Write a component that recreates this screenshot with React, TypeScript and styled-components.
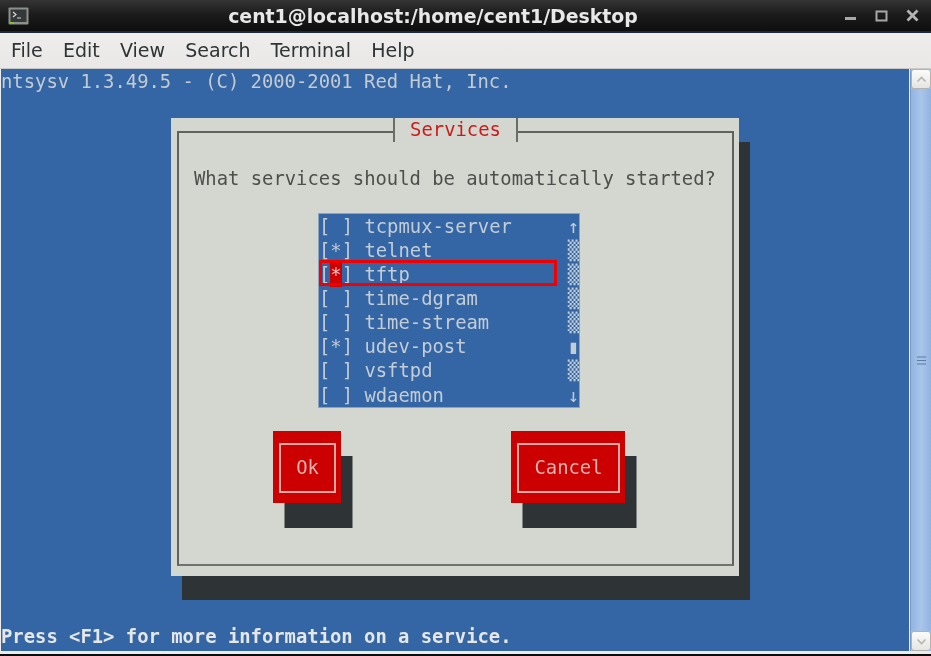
import React from 'react';
import styled, { createGlobalStyle } from 'styled-components';

const Global = createGlobalStyle`
  html, body { margin: 0; padding: 0; background: #000; overflow: hidden; }
  #root { width: 931px; height: 656px; overflow: hidden; }
`;

const Win = styled.div`
  width: 931px; height: 656px; display: flex; flex-direction: column; background: #0c0c0c;
  filter: blur(0.5px);
`;
const TitleBar = styled.div`
  height: 31px; flex: none; display: flex; align-items: center; position: relative;
  background: linear-gradient(#343434, #1c1c1c 45%, #0e0e0e);
  border-bottom: 2px solid #1d2a3a;
`;
const AppIcon = styled.svg`
  width: 21px; height: 18px; margin-left: 8px; flex: none;
`;
const TitleText = styled.div`
  flex: 1; text-align: center; padding-right: 7px;
  font: bold 18.9px/30px "DejaVu Sans", sans-serif; color: #e8e8e8; white-space: nowrap;
`;
const WinButtons = styled.div`
  display: flex; align-items: center; gap: 18px; margin-right: 12px; flex: none;
`;
const WinIcon = styled.svg`
  width: 13px; height: 13px; display: block;
`;
const MenuBar = styled.div`
  height: 36px; flex: none; box-sizing: border-box; display: flex; align-items: center; gap: 20.2px;
  padding: 0 0 2px 11px;
  background: linear-gradient(#eeedeb, #e9e8e6);
  border-bottom: 1px solid #c9c8c5;
  font: 19px/32px "DejaVu Sans", sans-serif; color: #2e3436;
`;
const MenuItem = styled.span``;
const TermArea = styled.div`
  height: 582px; flex: none; display: flex; background: #edecea;
`;
const Screen = styled.div`
  width: 908px; margin-left: 1px; flex: none; background: #3465a4; display: flex; flex-direction: column;
  font: 18.85px/24.08px "DejaVu Sans Mono", monospace; color: #c6ccd0; white-space: pre;
`;
const TopLine = styled.div`
  height: 24px; padding-top: 1px; color: #c3cbd2;
`;
const Dialog = styled.div`
  margin: 24px 0 0 170px; width: 568px; height: 458px; box-sizing: border-box; padding: 13px 5px 10px 6px;
  background: #d3d7cf; box-shadow: 11px 24px 0 #2e3436; position: relative; color: #555753;
`;
const DialogTitle = styled.div`
  position: absolute; left: 222px; top: 0; width: 125px; height: 24px; box-sizing: border-box;
  border-left: 2px solid #6a6d6a; border-right: 2px solid #6a6d6a; background: #d3d7cf;
  color: #cc1a1a; text-align: center; line-height: 24px;
`;
const Frame = styled.div`
  height: 100%; box-sizing: border-box; border: 2px solid #5f625f; border-bottom-color: #6f726f;
  padding: 34px 0 0 15px; display: flex; flex-direction: column;
`;
const Question = styled.div`
  height: 24px; line-height: 24px; color: #4d4f4c;
`;
const ListBox = styled.div`
  position: relative; margin: 23px 0 0 125px; padding-top: 1px; width: 260px; height: 192px;
  background: #3465a4; color: #c3cdd6; outline: 1px solid #8ca3bf;
`;
const Row = styled.div`
  display: flex; justify-content: space-between; height: 24.08px;
`;
const Label = styled.span``;
const Mark = styled.span<{ $active?: boolean }>`
  display: inline-block; width: 11.35px; text-align: center;
  ${p => p.$active ? 'background: #cc0000; color: #e8c8c8;' : ''}
`;
const ScrollCell = styled.span`
  width: 11.35px; text-align: center; flex: none; color: #c3cdd6;
`;
const Highlight = styled.div`
  position: absolute; left: 0; top: 46px; width: 238px; height: 26px; box-sizing: border-box;
  border: 3px solid #f00000;
`;
const Buttons = styled.div`
  display: flex; gap: 170px; margin: 24px 0 0 79px;
`;
const Btn = styled.div`
  background: #cc0000; box-shadow: 11.5px 25px 0 #2e3436; height: 72px; box-sizing: border-box;
  padding: 12px 5px 10px 6px; color: #dfb5b0;
`;
const BtnInner = styled.div<{ $w: number }>`
  width: ${p => p.$w}px; height: 50px; box-sizing: border-box; border: 2px solid #dfa9a4;
  display: flex; align-items: center; justify-content: center; line-height: 24px;
`;
const Spacer = styled.div`
  flex: 1;
`;
const BottomLine = styled.div`
  height: 24px; margin-bottom: 2px; font-weight: bold; color: #e4e7e6; line-height: 24px;
`;
const Scrollbar = styled.div`
  width: 21px; margin-left: 1px; flex: none; display: flex; flex-direction: column;
  background: #a3c0e6; border-left: 1px solid #7f99bd; box-sizing: border-box;
`;
const StepBtn = styled.div`
  height: 20px; flex: none; background: linear-gradient(#fbfbfa, #e6e5e2); border: 1px solid #b4b3af;
  border-radius: 3px; box-sizing: border-box; display: flex; align-items: center; justify-content: center;
`;
const Chevron = styled.svg`
  width: 11px; height: 7px;
`;
const Thumb = styled.div`
  flex: 1; display: flex; align-items: center; justify-content: center;
  background: linear-gradient(90deg, #92b4e2, #a9c5ea 50%, #93b3df);
`;
const Grip = styled.svg`
  width: 9px; height: 9px;
`;
const BottomEdge = styled.div`
  height: 3px; flex: none; background: #edecea;
`;

const rows: [string, string, string, boolean?][] = [
  [' ', 'tcpmux-server', '↑'],
  ['*', 'telnet', '▒'],
  ['*', 'tftp', '▒', true],
  [' ', 'time-dgram', '▒'],
  [' ', 'time-stream', '▒'],
  ['*', 'udev-post', '▮'],
  [' ', 'vsftpd', '▒'],
  [' ', 'wdaemon', '↓'],
];

export default function App() {
  return (
    <Win>
      <Global />
      <TitleBar>
        <AppIcon viewBox="0 0 21 18">
          <rect x="0.5" y="0.5" width="20" height="17" rx="1" fill="#8e908c" />
          <rect x="2.5" y="2.5" width="16" height="12.5" fill="#33393a" />
          <path d="M5 5l3 2.5-3 2.5M9 11h4" stroke="#d6d8d4" strokeWidth="1.2" fill="none" />
          <rect x="2" y="15" width="4" height="1.6" fill="#7ec63e" />
        </AppIcon>
        <TitleText>cent1@localhost:/home/cent1/Desktop</TitleText>
        <WinButtons>
          <WinIcon viewBox="0 0 13 13"><rect x="1" y="8" width="11" height="3" fill="#a8a8a6" /></WinIcon>
          <WinIcon viewBox="0 0 13 13"><path d="M1.5 2.5h10v9h-10z" fill="none" stroke="#a8a8a6" strokeWidth="2" /></WinIcon>
          <WinIcon viewBox="0 0 13 13"><path d="M1.5 1.5l10 10M11.5 1.5l-10 10" stroke="#b4b4b2" strokeWidth="2.8" /></WinIcon>
        </WinButtons>
      </TitleBar>
      <MenuBar>
        {['File', 'Edit', 'View', 'Search', 'Terminal', 'Help'].map(m => <MenuItem key={m}>{m}</MenuItem>)}
      </MenuBar>
      <TermArea>
        <Screen>
          <TopLine>ntsysv 1.3.49.5 - (C) 2000-2001 Red Hat, Inc.</TopLine>
          <Dialog>
            <DialogTitle>Services</DialogTitle>
            <Frame>
              <Question>What services should be automatically started?</Question>
              <ListBox>
                {rows.map(([m, name, s, active]) => (
                  <Row key={name}>
                    <Label>[<Mark $active={active}>{m}</Mark>] {name}</Label>
                    <ScrollCell>{s}</ScrollCell>
                  </Row>
                ))}
                <Highlight />
              </ListBox>
              <Buttons>
                <Btn><BtnInner $w={57}>Ok</BtnInner></Btn>
                <Btn><BtnInner $w={103}>Cancel</BtnInner></Btn>
              </Buttons>
            </Frame>
          </Dialog>
          <Spacer />
          <BottomLine>Press &lt;F1&gt; for more information on a service.</BottomLine>
        </Screen>
        <Scrollbar>
          <StepBtn>
            <Chevron viewBox="0 0 11 7"><path d="M1.5 5.5l4-4 4 4" fill="none" stroke="#b5b5b2" strokeWidth="1.6" /></Chevron>
          </StepBtn>
          <Thumb>
            <Grip viewBox="0 0 9 9"><path d="M0 1h9M0 4.5h9M0 8h9" stroke="#5d7ba6" strokeWidth="1.2" /></Grip>
          </Thumb>
          <StepBtn>
            <Chevron viewBox="0 0 11 7"><path d="M1.5 5.5l4 4 4-4" transform="translate(0 -4)" fill="none" stroke="#b5b5b2" strokeWidth="1.6" /></Chevron>
          </StepBtn>
        </Scrollbar>
      </TermArea>
      <BottomEdge />
    </Win>
  );
}
